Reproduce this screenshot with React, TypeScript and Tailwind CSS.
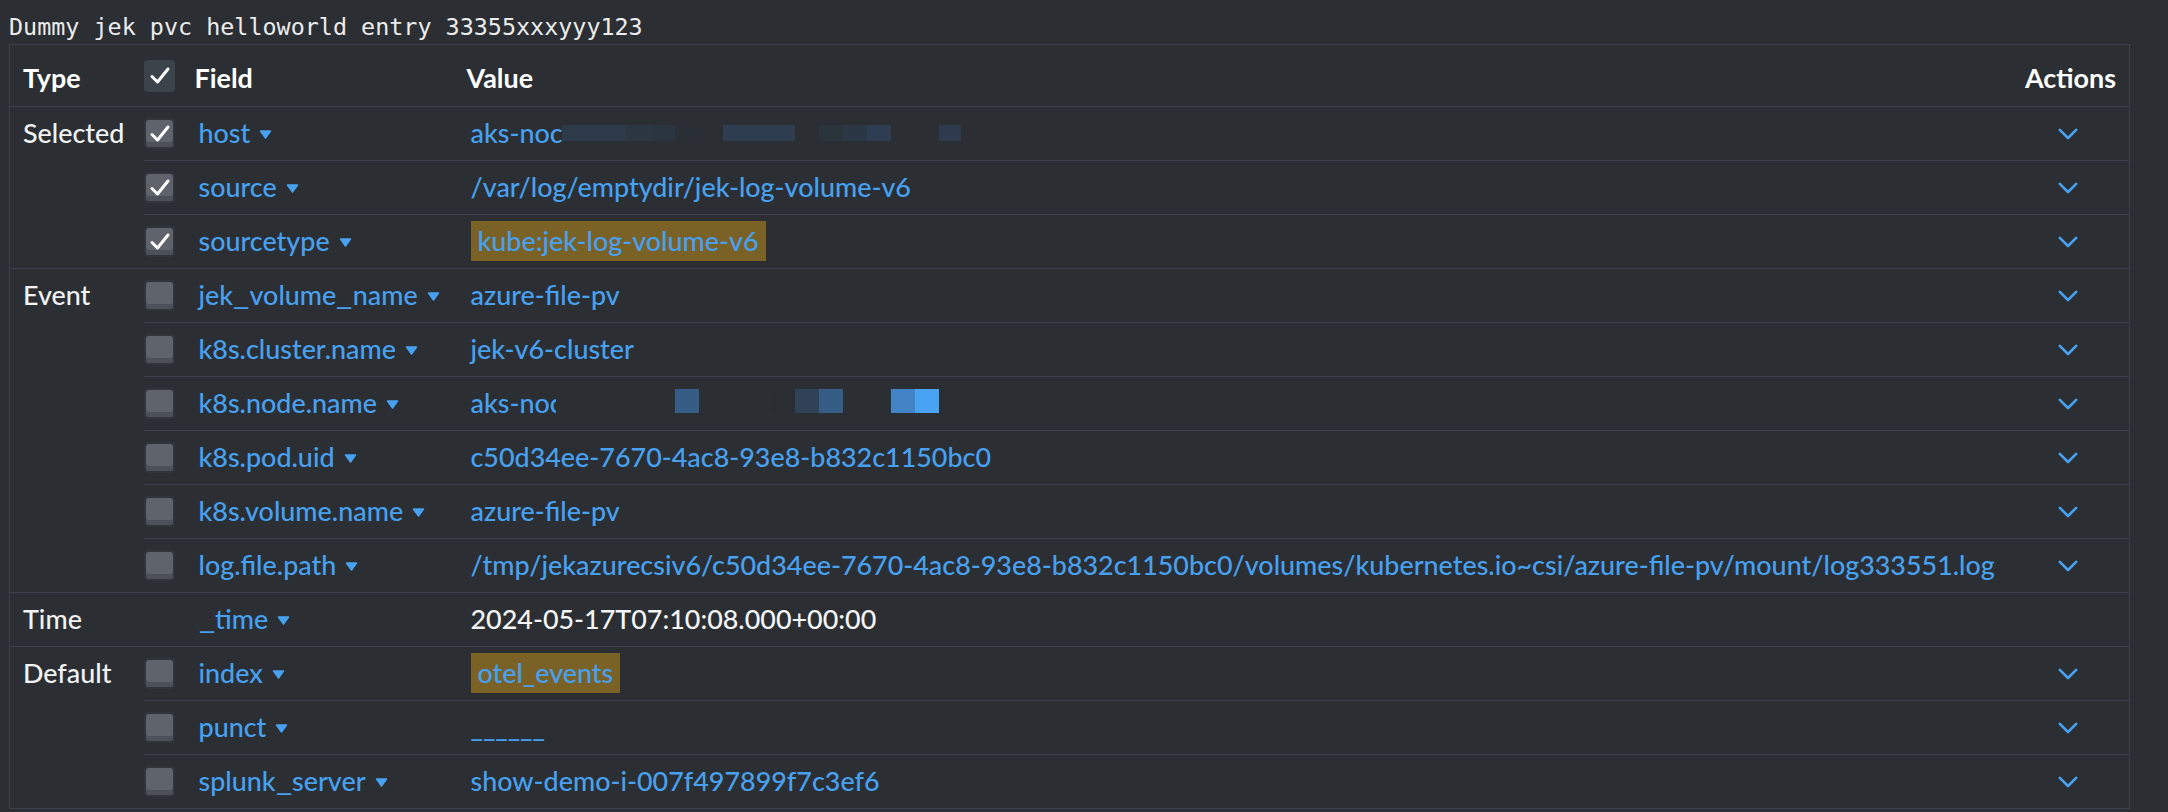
import React from "react"

type Cell = [number, number, string]

interface Row {
  type?: string
  span?: number
  field: string
  value: string
  checked?: boolean
  box?: boolean
  white?: boolean
  hl?: boolean
  action?: boolean
  mask?: { top: number; h: number; cells: Cell[] }
}

const rows: Row[] = [
  {
    type: "Selected",
    span: 3,
    field: "host",
    value: "aks-noc",
    checked: true,
    mask: {
      top: 23,
      h: 16,
      cells: [
        [91, 64, "#2d3a4a"],
        [155, 25, "#2c3743"],
        [180, 24, "#2b3540"],
        [204, 24, "#2a2f35"],
        [228, 24, "#2b2f33"],
        [252, 72, "#2e3d50"],
        [348, 24, "#2b333b"],
        [372, 24, "#2c3746"],
        [396, 24, "#2f3d52"],
        [468, 22, "#2e3b4e"],
      ],
    },
  },
  { field: "source", value: "/var/log/emptydir/jek-log-volume-v6", checked: true },
  { field: "sourcetype", value: "kube:jek-log-volume-v6", checked: true, hl: true },
  { type: "Event", span: 6, field: "jek_volume_name", value: "azure-file-pv" },
  { field: "k8s.cluster.name", value: "jek-v6-cluster" },
  {
    field: "k8s.node.name",
    value: "aks-noc",
    mask: {
      top: 17,
      h: 24,
      cells: [
        [85, 119, "#2b2f33"],
        [204, 24, "#365d85"],
        [300, 24, "#2a2e33"],
        [324, 24, "#2f4256"],
        [348, 24, "#365d85"],
        [420, 24, "#4384c7"],
        [444, 24, "#49a2f2"],
      ],
    },
  },
  { field: "k8s.pod.uid", value: "c50d34ee-7670-4ac8-93e8-b832c1150bc0" },
  { field: "k8s.volume.name", value: "azure-file-pv" },
  {
    field: "log.file.path",
    value:
      "/tmp/jekazurecsiv6/c50d34ee-7670-4ac8-93e8-b832c1150bc0/volumes/kubernetes.io~csi/azure-file-pv/mount/log333551.log",
  },
  {
    type: "Time",
    span: 1,
    field: "_time",
    value: "2024-05-17T07:10:08.000+00:00",
    box: false,
    white: true,
    action: false,
  },
  { type: "Default", span: 3, field: "index", value: "otel_events", hl: true },
  { field: "punct", value: "______" },
  { field: "splunk_server", value: "show-demo-i-007f497899f7c3ef6" },
]

function Check() {
  return (
    <svg width="31" height="31" viewBox="0 0 31 31" className="absolute left-0 top-0">
      <path
        d="M8 16.5 L13.5 22 L24 9"
        fill="none"
        stroke="#ffffff"
        strokeWidth="3"
        strokeLinecap="round"
        strokeLinejoin="round"
      />
    </svg>
  )
}

function Checkbox({ checked }: { checked?: boolean }) {
  return (
    <span className="relative block h-[31px] w-[31px] rounded-[4px] bg-[#30353b] p-[2px]">
      <span className="block h-full w-full rounded-[3px] bg-[#5e636c] shadow-[inset_0_-5px_0_#4c5159]" />
      {checked && <Check />}
    </span>
  )
}

function Caret() {
  return (
    <svg width="13" height="9" viewBox="0 0 13 9" className="ml-[9px] mt-[2px] shrink-0">
      <path d="M1.5 1 L11.5 1 L6.5 8 Z" fill="#48a1f0" stroke="#48a1f0" strokeWidth="1.5" strokeLinejoin="round" />
    </svg>
  )
}

function Chevron() {
  return (
    <svg width="20" height="12" viewBox="0 0 20 12">
      <polyline
        points="1.8,1.8 10,10 18.2,1.8"
        fill="none"
        stroke="#48a1f0"
        strokeWidth="2.6"
        strokeLinecap="round"
        strokeLinejoin="round"
      />
    </svg>
  )
}

// underscores in the reference font run wider than Lato's
function FieldName({ name }: { name: string }) {
  const parts = name.split("_")
  return (
    <>
      {parts.map((p, i) => (
        <React.Fragment key={i}>
          {i > 0 && <span className="mx-[2px] inline-block scale-x-[1.35]">_</span>}
          {p}
        </React.Fragment>
      ))}
    </>
  )
}

export default function App() {
  return (
    <div className="h-[812px] w-[2168px] overflow-hidden bg-[#2b2f33] pt-[12px] text-white">
      <div className="h-[30px] pl-[9px] font-['DejaVu_Sans_Mono',monospace] text-[23.4px] leading-[30px] text-[#ececec]">
        Dummy jek pvc helloworld entry 33355xxxyyy123
      </div>
      <table className="ml-[9px] mt-[2px] w-[2121px] table-fixed border-collapse border border-[#3a434d] font-['Lato',sans-serif] text-[26.9px] font-medium">
        <colgroup>
          <col className="w-[134px]" />
          <col className="w-[51px]" />
          <col className="w-[272px]" />
          <col />
          <col className="w-[120px]" />
        </colgroup>
        <thead>
          <tr className="h-[62px] border-b border-[#3a434d] font-bold">
            <td className="pl-[13px] pt-[6px] text-left">Type</td>
            <td>
              <span className="relative block h-[32px] w-[31px] rounded-[4px] bg-[#3d434b]">
                <Check />
              </span>
            </td>
            <td className="pt-[6px] text-left">Field</td>
            <td className="pt-[6px] text-left">Value</td>
            <td className="pr-[13px] pt-[6px] text-right">Actions</td>
          </tr>
        </thead>
        <tbody>
          {rows.map((r) => (
            <tr key={r.field} className="h-[54px]">
              {r.type && (
                <td
                  rowSpan={r.span}
                  className="border-b border-[#3a434d] pl-[13px] align-top leading-[52px] text-[#f2f2f2]"
                >
                  {r.type}
                </td>
              )}
              <td className="border-b border-[#3a434d] align-middle">
                {r.box !== false && <Checkbox checked={r.checked} />}
              </td>
              <td className="border-b border-[#3a434d] pl-[4px] align-middle">
                <span className="flex items-center whitespace-nowrap text-[#48a1f0]">
                  <span>
                    <FieldName name={r.field} />
                  </span>
                  <Caret />
                </span>
              </td>
              <td className="border-b border-[#3a434d] pl-[4px] align-middle">
                <span className="relative block whitespace-nowrap">
                  {r.hl ? (
                    <span className="inline-block h-[40px] bg-[#7a6126] px-[7px] leading-[40px] text-[#48a1f0]">
                      {r.value}
                    </span>
                  ) : (
                    <span className={r.white ? "text-[#f4f4f4]" : "text-[#48a1f0]"}>{r.value}</span>
                  )}
                  {r.mask &&
                    r.mask.cells.map(([x, w, c]) => (
                      <span
                        key={x}
                        className="absolute"
                        style={{ left: x, width: w, top: r.mask!.top - 11, height: r.mask!.h, background: c }}
                      />
                    ))}
                </span>
              </td>
              <td className="border-b border-[#3a434d] pr-[51px] align-middle">
                {r.action !== false && (
                  <span className="flex justify-end">
                    <Chevron />
                  </span>
                )}
              </td>
            </tr>
          ))}
        </tbody>
      </table>
    </div>
  )
}
